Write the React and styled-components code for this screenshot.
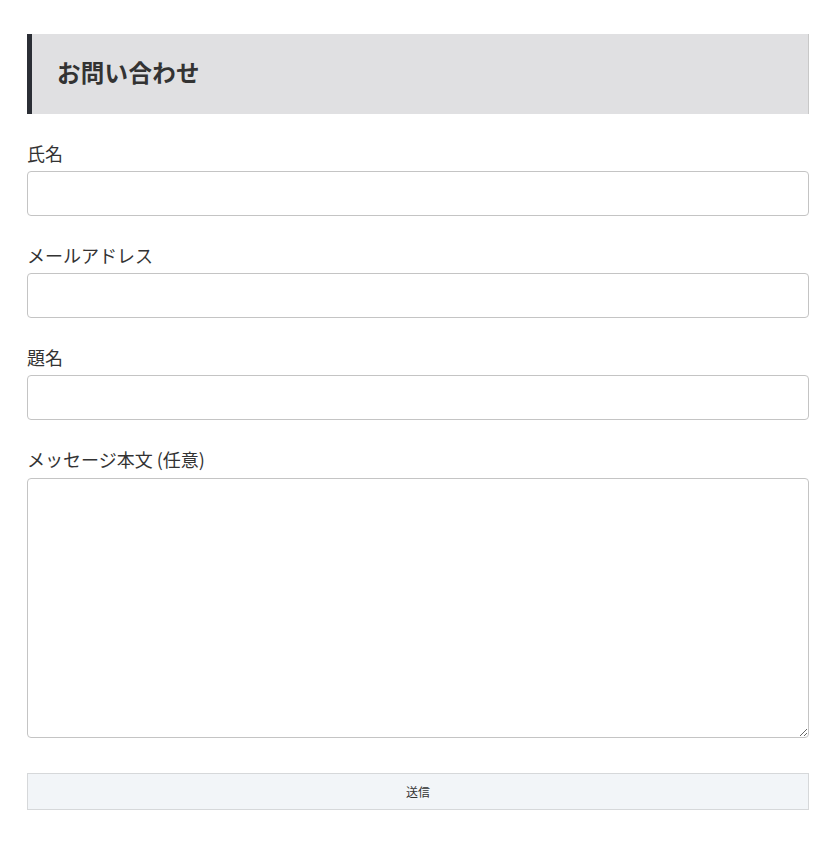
import React from "react";
import styled, { createGlobalStyle } from "styled-components";

const Global = createGlobalStyle`
  html, body { margin: 0; padding: 0; background: #fff; }
  body { font-family: "Noto Sans CJK JP", "Noto Sans", sans-serif; color: #333; }
  * { box-sizing: border-box; }
`;

const Page = styled.div`
  padding: 34px 26px 40px 27px;
`;

const Heading = styled.h2`
  margin: 0 0 26px;
  height: 80px;
  display: flex;
  align-items: center;
  padding: 0 0 5px 25px;
  background: #e0e0e2;
  border-left: 5px solid #2b2e35;
  border-right: 1px solid #c8c8c8;
  font-size: 23.5px;
  font-weight: 700;
  color: #333;
  letter-spacing: 0.3px;
`;

const Form = styled.form`
  display: flex;
  flex-direction: column;
`;

const Field = styled.div`
  display: flex;
  flex-direction: column;
  gap: ${(p) => p.$gap || 4}px;
  margin-bottom: ${(p) => p.$mb || 26}px;
`;

const Label = styled.label`
  font-size: 18px;
  line-height: 27px;
  color: #333;
`;

const Input = styled.input`
  height: 45px;
  width: 100%;
  border: 1px solid #c4c4c4;
  border-radius: 4px;
  padding: 6px 12px;
  font-size: 16px;
  font-family: inherit;
  outline: none;
`;

const TextArea = styled.textarea`
  height: 260px;
  width: 100%;
  border: 1px solid #c4c4c4;
  border-radius: 4px;
  padding: 6px 12px;
  font-size: 16px;
  font-family: inherit;
  resize: vertical;
  outline: none;
  display: block;
`;

const Submit = styled.button`
  height: 37px;
  width: 100%;
  background: #f2f5f8;
  border: 1px solid #d6d8da;
  font-family: inherit;
  font-size: 12px;
  color: #333;
  cursor: pointer;
`;

export default function App() {
  return (
    <Page>
      <Global />
      <Heading>お問い合わせ</Heading>
      <Form onSubmit={(e) => e.preventDefault()}>
        <Field>
          <Label>氏名</Label>
          <Input type="text" />
        </Field>
        <Field>
          <Label>メールアドレス</Label>
          <Input type="email" />
        </Field>
        <Field>
          <Label>題名</Label>
          <Input type="text" />
        </Field>
        <Field $gap={5} $mb={35}>
          <Label>メッセージ本文 (任意)</Label>
          <TextArea />
        </Field>
        <Submit type="submit">送信</Submit>
      </Form>
    </Page>
  );
}
